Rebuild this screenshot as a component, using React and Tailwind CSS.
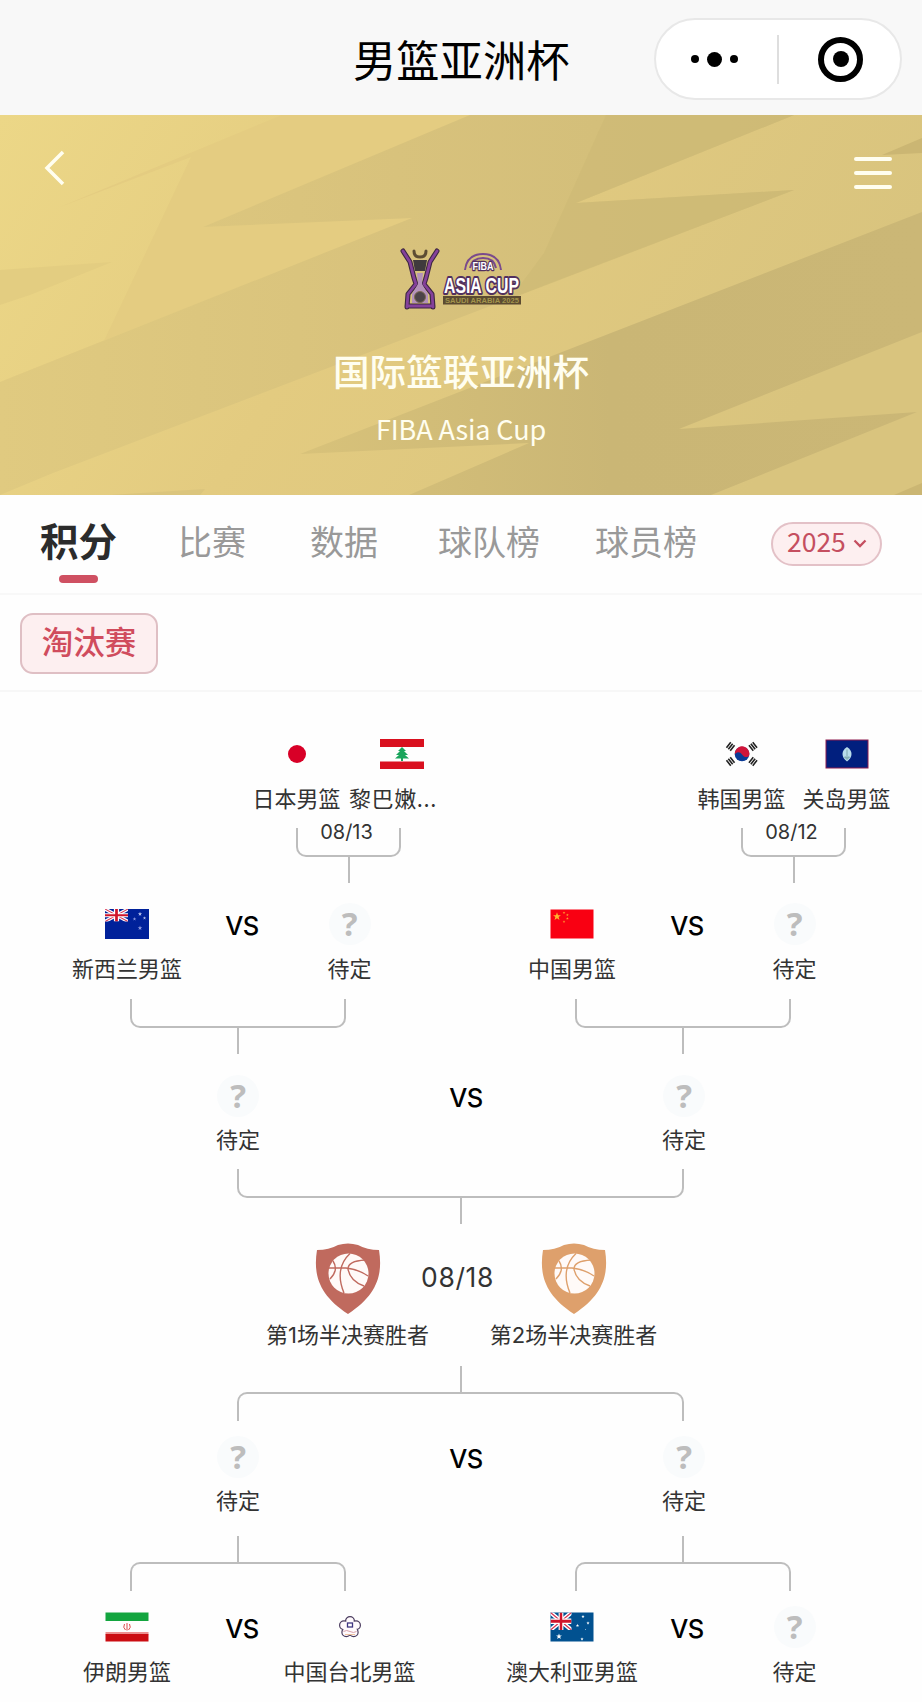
import React from "react";

const TABS = [
  { label: "比赛", className: "ml-[61px]" },
  { label: "数据", className: "ml-[64px]" },
  { label: "球队榜", className: "ml-[60px]" },
  { label: "球员榜", className: "ml-[55px]" },
];

const UnionJack = () => (
  <>
    <path d="M0 0L22 16M22 0L0 16" stroke="#fff" strokeWidth="4" />
    <path d="M0 0L22 16M22 0L0 16" stroke="#d8304f" strokeWidth="1.2" />
    <path d="M11 0V16M0 8H22" stroke="#fff" strokeWidth="5" />
    <path d="M11 0V16M0 8H22" stroke="#cf142b" strokeWidth="2.6" />
  </>
);

const Star = ({ x, y, r, fill = "#fff" }) => (
  <path
    transform={`translate(${x} ${y}) scale(${r})`}
    d="M0-1L.24-.32.95-.31.38.12.59.81 0 .4-.59.81-.38.12-.95-.31-.24-.32Z"
    fill={fill}
  />
);

const Trigram = ({ x, y, rotate }) => (
  <path
    transform={`translate(${x} ${y}) rotate(${rotate})`}
    d="M-3.5-2.4H3.5M-3.5 0H3.5M-3.5 2.4H3.5"
    stroke="#222"
    strokeWidth="1.6"
  />
);

const FLAGS = {
  jp: <circle cx="22" cy="15" r="9" fill="#d80027" />,
  lb: (
    <>
      <path d="M0 0H44V8H0ZM0 22.5H44V30H0Z" fill="#d9101f" />
      <path
        d="M22 8L18 12H20L16 16H19L15 19.5H21V22H23V19.5H29L25 16H28L24 12H26Z"
        fill="#1aa55c"
      />
    </>
  ),
  kr: (
    <>
      <circle cx="22" cy="15" r="7.3" fill="#0a3a96" />
      <path
        d="M14.9 13A7.3 7.3 0 0 1 29.2 16.5C27.5 19 24 18.5 22 15.5C20 12.5 16.5 12.5 14.9 15.5Z"
        fill="#d0143a"
      />
      <Trigram x={10.5} y={7.5} rotate={-52} />
      <Trigram x={33} y={7.5} rotate={52} />
      <Trigram x={10.5} y={22.5} rotate={52} />
      <Trigram x={33} y={22.5} rotate={-52} />
    </>
  ),
  gu: (
    <>
      <rect x="1" y="1" width="42" height="28" fill="#011f7e" stroke="#8d1d4e" />
      <path d="M22 8Q26.5 11 26.5 15T22 22.5Q17.5 19 17.5 15T22 8Z" fill="#b9dceb" />
      <path d="M19.5 18H24.5L22 20.5ZM22 10.5V17" fill="#8fb5ba" stroke="#7fa8ae" strokeWidth="1" />
    </>
  ),
  nz: (
    <>
      <rect width="44" height="30" fill="#00219a" />
      <svg width="23" height="12.5" viewBox="0 0 22 16" preserveAspectRatio="none">
        <UnionJack />
      </svg>
      <Star x={35} y={5} r={2.2} fill="#b9c3ee" />
      <Star x={29.5} y={10} r={1.9} fill="#8d9ae0" />
      <Star x={39.5} y={9} r={1.7} fill="#b9c3ee" />
      <Star x={35} y={19} r={2.4} fill="#8d9ae0" />
    </>
  ),
  cn: (
    <>
      <rect x=".5" y=".5" width="43" height="29" fill="#f90012" />
      <Star x={7} y={7.5} r={4.2} fill="#ffb52e" />
      <Star x={14} y={3.8} r={1.4} fill="#ffa02e" />
      <Star x={17.4} y={6} r={1.4} fill="#ffa02e" />
      <Star x={17.4} y={9.5} r={1.4} fill="#ffa02e" />
      <Star x={14} y={12.6} r={1.4} fill="#ffa02e" />
    </>
  ),
  ir: (
    <>
      <rect x=".5" y=".5" width="43" height="8.5" fill="#13a53f" />
      <rect x=".5" y="20" width="43" height="2.5" fill="#ec8f90" />
      <rect x=".5" y="22" width="43" height="7.5" fill="#cb0d12" />
      <path
        d="M22 11V18.5M19.5 12Q17.5 15.5 20.5 18M24.5 12Q26.5 15.5 23.5 18"
        fill="none"
        stroke="#dc4b4b"
        strokeWidth="1"
      />
    </>
  ),
  tw: (
    <>
      <g fill="#fffafc" stroke="#4a3b5e" strokeWidth="1.2">
        <circle cx="22" cy="9" r="4.4" />
        <circle cx="28" cy="13.2" r="4.4" />
        <circle cx="25.7" cy="20.2" r="4.4" />
        <circle cx="18.3" cy="20.2" r="4.4" />
        <circle cx="16" cy="13.2" r="4.4" />
      </g>
      <circle cx="22" cy="15.3" r="7" fill="#fffafc" />
      <rect x="19.5" y="11" width="5" height="4" fill="#fff" stroke="#3f3580" strokeWidth="1.3" />
      <path d="M15.5 19.5Q18.5 17.5 22 19.5T28.5 19.5" fill="none" stroke="#d9a2ab" />
      <path d="M17 22.5H27" stroke="#efc2a0" strokeWidth="1" />
    </>
  ),
  au: (
    <>
      <rect x=".5" y=".5" width="43" height="29" fill="#015190" />
      <svg x=".5" y=".5" width="21" height="17.5" viewBox="0 0 22 16" preserveAspectRatio="none">
        <UnionJack />
      </svg>
      <Star x={9} y={24.5} r={3.1} />
      <Star x={33} y={4.5} r={1.7} />
      <Star x={38} y={11} r={1.7} />
      <Star x={27.5} y={13.5} r={1.7} />
      <Star x={32} y={27} r={1.7} />
      <Star x={35.5} y={17.5} r={0.7} />
    </>
  ),
};

const Team = ({ flag, name = "待定", nameClass = "mt-[7px]", className = "" }) => (
  <div className={`flex flex-col items-center h-[81px] shrink-0 ${className}`}>
    <div className="h-[42px] flex items-center justify-center">
      {flag ? (
        <svg width="44" height="30" viewBox="0 0 44 30">
          {FLAGS[flag]}
        </svg>
      ) : (
        <div className="w-[42px] h-[42px] rounded-full bg-[#f9fbfc] flex items-center justify-center pb-0.5 font-['Noto_Sans',sans-serif] font-bold text-[33px] leading-none text-[#bdbdbd]">
          ?
        </div>
      )}
    </div>
    <div className={`h-[30px] leading-[30px] text-[22px] whitespace-nowrap ${nameClass}`}>
      {name}
    </div>
  </div>
);

const Vs = ({ className = "" }) => (
  <div
    className={`h-[42px] leading-[45px] flex justify-center font-['Inter',sans-serif] font-medium text-[25.5px] tracking-[-0.5px] text-black shrink-0 ${className}`}
  >
    VS
  </div>
);

const Match = ({ home, away }) => (
  <div className="w-[445px] pl-[14px] flex">
    <Team {...home} className="w-[194px]" />
    <Vs className="w-[36px]" />
    <Team {...away} className="w-[179px]" />
  </div>
);

// Two legs joining into one stem
const JoinDown = ({ className = "", children }) => (
  <div className={`flex flex-col items-center shrink-0 ${className}`}>
    <div className="w-full h-[29px] border-2 border-t-0 border-[#bdbdbd] rounded-b-[10px] flex justify-center">
      {children}
    </div>
    <div className="w-0.5 h-[26px] bg-[#bdbdbd]" />
  </div>
);

const SplitDown = ({ className = "" }) => (
  <div className={`flex flex-col items-center shrink-0 ${className}`}>
    <div className="w-0.5 h-[26px] bg-[#bdbdbd]" />
    <div className="w-full h-[29px] border-2 border-b-0 border-[#bdbdbd] rounded-t-[10px]" />
  </div>
);

const Qualifier = ({ home, away, date }) => (
  <div className="w-[445px] pl-[228px]">
    <div className="flex">
      <Team {...home} className="w-[105px]" />
      <Team {...away} className="w-[105px]" />
    </div>
    <JoinDown className="mt-[14px] ml-[52px] w-[105px]">
      <span className="-mt-[6px] -ml-[4px] font-['Inter',sans-serif] text-[20px] leading-[21px]">
        {date}
      </span>
    </JoinDown>
  </div>
);

const Semifinal = () => (
  <div className="flex pl-[178px]">
    <Team className="w-[120px]" nameClass="mt-[6px]" />
    <Vs className="ml-[138px] w-[60px]" />
    <Team className="ml-[128px] w-[120px]" nameClass="mt-[6px]" />
  </div>
);

const Finalist = ({ name, color }) => (
  <div className="flex flex-col items-center w-[165px]">
    <svg width="66" height="71" viewBox="0 0 66 71">
      <path
        d="M2 7Q14 7 23 2Q33-1 43 2Q52 7 64 7C68 32 62 52 33 71C4 52-2 32 2 7Z"
        fill={color}
      />
      <circle cx="33.5" cy="30.5" r="20" fill="#fffaf8" />
      <g fill="none" stroke={color} strokeWidth="1.4">
        <path d="M14 25H31Q45 27 53 33" />
        <path d="M35 10.5Q27 18 25.5 28T29 50" />
        <path d="M50 17Q33 18 33 26Q35 38 49 43" />
        <path d="M18 18Q24 27 15 36" />
      </g>
    </svg>
    <div className="mt-[5px] h-[31px] leading-[32px] font-['Inter','Noto_Sans_CJK_SC',sans-serif] text-[22px] whitespace-nowrap">
      {name}
    </div>
  </div>
);

const HeroPattern = () => (
  <svg
    className="absolute inset-0 w-full h-full"
    viewBox="0 0 922 380"
    preserveAspectRatio="none"
  >
    <defs>
      <linearGradient id="base" x1="0" y1="0" x2="1" y2="0.25">
        <stop offset="0" stopColor="#ecd787" />
        <stop offset="0.45" stopColor="#e3cb80" />
        <stop offset="1" stopColor="#d9c47e" />
      </linearGradient>
      <linearGradient id="shadeA" x1="0" y1="0" x2="1" y2="0">
        <stop offset="0" stopColor="#e0ca80" />
        <stop offset="0.5" stopColor="#d8c27c" />
        <stop offset="1" stopColor="#d0bc78" />
      </linearGradient>
      <linearGradient id="shadeB" x1="0" y1="0" x2="1" y2="0">
        <stop offset="0" stopColor="#d8c27a" />
        <stop offset="0.5" stopColor="#cab675" />
        <stop offset="1" stopColor="#cbb776" />
      </linearGradient>
    </defs>
    <rect width="922" height="380" fill="url(#base)" />
    <path d="M282 0H470L203 112L412 103L0 267L103 228L191 42L60 92Z" fill="#e4cc81" />
    <path d="M0 155L112 147L30 180L0 190Z" fill="#e3cd81" />
    <path
      d="M470 0H794L576 88L794 75L53 358L0 380V267L412 103L203 112Z"
      fill="url(#shadeA)"
    />
    <path d="M606 0H794L576 88L794 75L510 184L544 138Z" fill="#cdb975" opacity="0.6" />
    <path
      d="M922 97L300 339L529 328L409 380H711L917 297L679 314L922 217Z"
      fill="url(#shadeB)"
    />
    <path d="M922 23L882 40L922 38Z" fill="#cbb673" />
    <path d="M922 368L894 380H922Z" fill="#cbb673" />
    <path d="M205 374L110 380H200Z" fill="#dbc57d" />
  </svg>
);

const CupLogo = () => (
  <svg className="overflow-visible" width="122" height="62" viewBox="0 0 122 62">
    <g fill="none" strokeLinecap="round" strokeLinejoin="round">
      <path
        d="M3 3L10 14L14 30L16 36L8 46L7 59M37 3L30 14L26 30L24 36L32 46L33 59M7 58H33"
        stroke="#3d2740"
        strokeWidth="5"
      />
      <path
        d="M3 3L10 14L14 30L16 36L8 46L7 59M37 3L30 14L26 30L24 36L32 46L33 59M7 58H33"
        stroke="#84419a"
        strokeWidth="2.8"
      />
      <path d="M14 3Q14 9 20 9T26 3" stroke="#5c4c33" strokeWidth="3" />
    </g>
    <path d="M13 12H27L25 23H15Z" fill="#3f3a3d" />
    <path d="M17 25H23L22 36L28 46V55H12V46L18 36Z" fill="#b491ba" />
    <circle cx="20" cy="49" r="5.5" fill="#4c4348" stroke="#7d6a50" />
    <path
      d="M65 22Q67 6 83 6T101 22M70 20Q72 10 83 10T96 20"
      fill="none"
      stroke="#7a4a8c"
      strokeWidth="2"
    />
    <g
      fontFamily="'Liberation Sans', sans-serif"
      fontWeight="bold"
      textAnchor="middle"
      fill="#fff"
      stroke="#52305f"
      strokeLinejoin="round"
      paintOrder="stroke"
    >
      <text x="83" y="22" fontSize="11" strokeWidth="2.5" textLength="21" lengthAdjust="spacingAndGlyphs">
        FIBA
      </text>
      <text x="81.5" y="44.5" fontSize="22" strokeWidth="4" textLength="75" lengthAdjust="spacingAndGlyphs">
        ASIA CUP
      </text>
    </g>
    <rect x="43" y="48" width="78" height="8.5" fill="#5c4b31" />
    <text
      x="82"
      y="55"
      fontFamily="'Liberation Sans', sans-serif"
      fontSize="7"
      fontWeight="bold"
      textAnchor="middle"
      fill="#a2934c"
      textLength="74"
      lengthAdjust="spacingAndGlyphs"
    >
      SAUDI ARABIA 2025
    </text>
  </svg>
);

const TitleBar = () => (
  <header className="h-[115px] bg-[#f8f8f8] pr-5 pt-[18px] flex">
    <h1 className="ml-[353px] mt-[8px] h-16 leading-[64px] w-[217px] text-[43.3px] text-black whitespace-nowrap">
      男篮亚洲杯
    </h1>
    <div className="ml-auto w-[248px] h-[82px] rounded-full border-2 border-[#e8e8e8] bg-white flex items-center">
      <div className="w-[121px] pr-1 flex items-center justify-center gap-2">
        <i className="w-2 h-2 rounded-full bg-black" />
        <i className="w-[15px] h-[15px] rounded-full bg-black" />
        <i className="w-2 h-2 rounded-full bg-black" />
      </div>
      <div className="w-0.5 h-[49px] bg-[#dedede]" />
      <div className="flex-1 pl-0.5 flex justify-center">
        <div className="w-[45px] h-[45px] rounded-full border-[6px] border-black flex items-center justify-center">
          <i className="w-4 h-4 rounded-full bg-black" />
        </div>
      </div>
    </div>
  </header>
);

const App = () => {
  return (
    <div className="w-[922px] h-[1702px] overflow-hidden bg-[#fefefe] text-[#333] font-['Noto_Sans_CJK_SC',sans-serif]">
      <TitleBar />

      <section className="relative h-[380px] text-[#fffef0]">
        <HeroPattern />
        <div className="relative flex flex-col items-center">
          <div className="w-full h-[133px] flex justify-between pl-[43px] pr-[30px]">
            <svg className="mt-[34px]" width="24" height="38" viewBox="0 0 24 38">
              <path d="M20 3L4 19L20 35" fill="none" stroke="currentColor" strokeWidth="3.5" />
            </svg>
            <div className="mt-[42px] w-[38px] flex flex-col gap-[10px]">
              <i className="h-1 rounded-sm bg-current" />
              <i className="h-1 rounded-sm bg-current" />
              <i className="h-1 rounded-sm bg-current" />
            </div>
          </div>
          <CupLogo />
          <h2 className="mt-[35px] h-[52px] leading-[52px] text-[36.6px] font-medium">
            国际篮联亚洲杯
          </h2>
          <p className="mt-[12px] h-[40px] leading-[40px] text-[27px] tracking-[-0.1px]">
            FIBA Asia Cup
          </p>
        </div>
      </section>

      <nav className="h-[100px] flex border-b-2 border-[#f8f8f8] pl-[40px] text-[34px] text-[#999] whitespace-nowrap">
        <div className="flex flex-col items-center w-[77px] pt-[16px]">
          <span className="h-[56px] leading-[56px] text-[38.5px] font-bold text-[#2b2b2b]">
            积分
          </span>
          <i className="mt-[8px] w-[39px] h-2 rounded-full bg-[#cf5062]" />
        </div>
        {TABS.map((tab) => (
          <span key={tab.label} className={`h-[92px] leading-[92px] ${tab.className}`}>
            {tab.label}
          </span>
        ))}
        <div className="ml-[74px] mt-[27px] w-[111px] h-[44px] rounded-full border-2 border-[#e3c1c7] bg-[#fdeff0] pl-[14px] flex items-center text-[#c54f60] text-[26.5px]">
          <span className="pb-1.5">2025</span>
          <svg className="ml-[7px] mb-0.5" width="14" height="9" viewBox="0 0 14 9">
            <path d="M1.5 1.5L7 7L12.5 1.5" fill="none" stroke="currentColor" strokeWidth="2.3" />
          </svg>
        </div>
      </nav>

      <div className="h-[97px] border-b-2 border-[#f7f7f7] pl-5 pt-[18px]">
        <button className="w-[138px] h-[61px] rounded-[13px] border-2 border-[#dfbfc4] bg-[#fdeff0] text-[#d04c5d] text-[31.5px] leading-[51px] font-medium pb-[6px]">
          淘汰赛
        </button>
      </div>

      <main className="pt-[41px]">
        <div className="flex pl-4">
          <Qualifier
            home={{ flag: "jp", name: "日本男篮" }}
            away={{
              flag: "lb",
              name: "黎巴嫩...",
              nameClass: "mt-[7px] -ml-[17px] tracking-[0.6px]",
            }}
            date="08/13"
          />
          <Qualifier
            home={{ flag: "kr", name: "韩国男篮" }}
            away={{ flag: "gu", name: "关岛男篮" }}
            date="08/12"
          />
        </div>

        <div className="mt-5 flex pl-4">
          <Match home={{ flag: "nz", name: "新西兰男篮" }} away={{}} />
          <Match home={{ flag: "cn", name: "中国男篮" }} away={{}} />
        </div>
        <div className="mt-[15px] pl-[130px] flex gap-[229px]">
          <JoinDown className="w-[216px]" />
          <JoinDown className="w-[216px]" />
        </div>

        <div className="mt-[21px]">
          <Semifinal />
        </div>
        <JoinDown className="mt-[13px] ml-[237px] w-[447px]" />

        <div className="mt-[19px] pl-[265px] flex">
          <Finalist name="第1场半决赛胜者" color="#c06a5e" />
          <div className="w-[61px] flex justify-center font-['Inter',sans-serif] text-[26.5px] tracking-[0.6px] leading-[69px] h-[71px]">
            <span className="whitespace-nowrap -ml-[24px] -mr-[18px]">08/18</span>
          </div>
          <Finalist name="第2场半决赛胜者" color="#dea06c" />
        </div>
        <SplitDown className="mt-[16px] ml-[237px] w-[447px]" />

        <div className="mt-[15px]">
          <Semifinal />
        </div>
        <div className="mt-[19px] pl-[130px] flex gap-[229px]">
          <SplitDown className="w-[216px]" />
          <SplitDown className="w-[216px]" />
        </div>

        <div className="mt-[15px] flex pl-4">
          <Match
            home={{ flag: "ir", name: "伊朗男篮" }}
            away={{ flag: "tw", name: "中国台北男篮" }}
          />
          <Match home={{ flag: "au", name: "澳大利亚男篮" }} away={{}} />
        </div>
      </main>
    </div>
  );
};

export default App;
